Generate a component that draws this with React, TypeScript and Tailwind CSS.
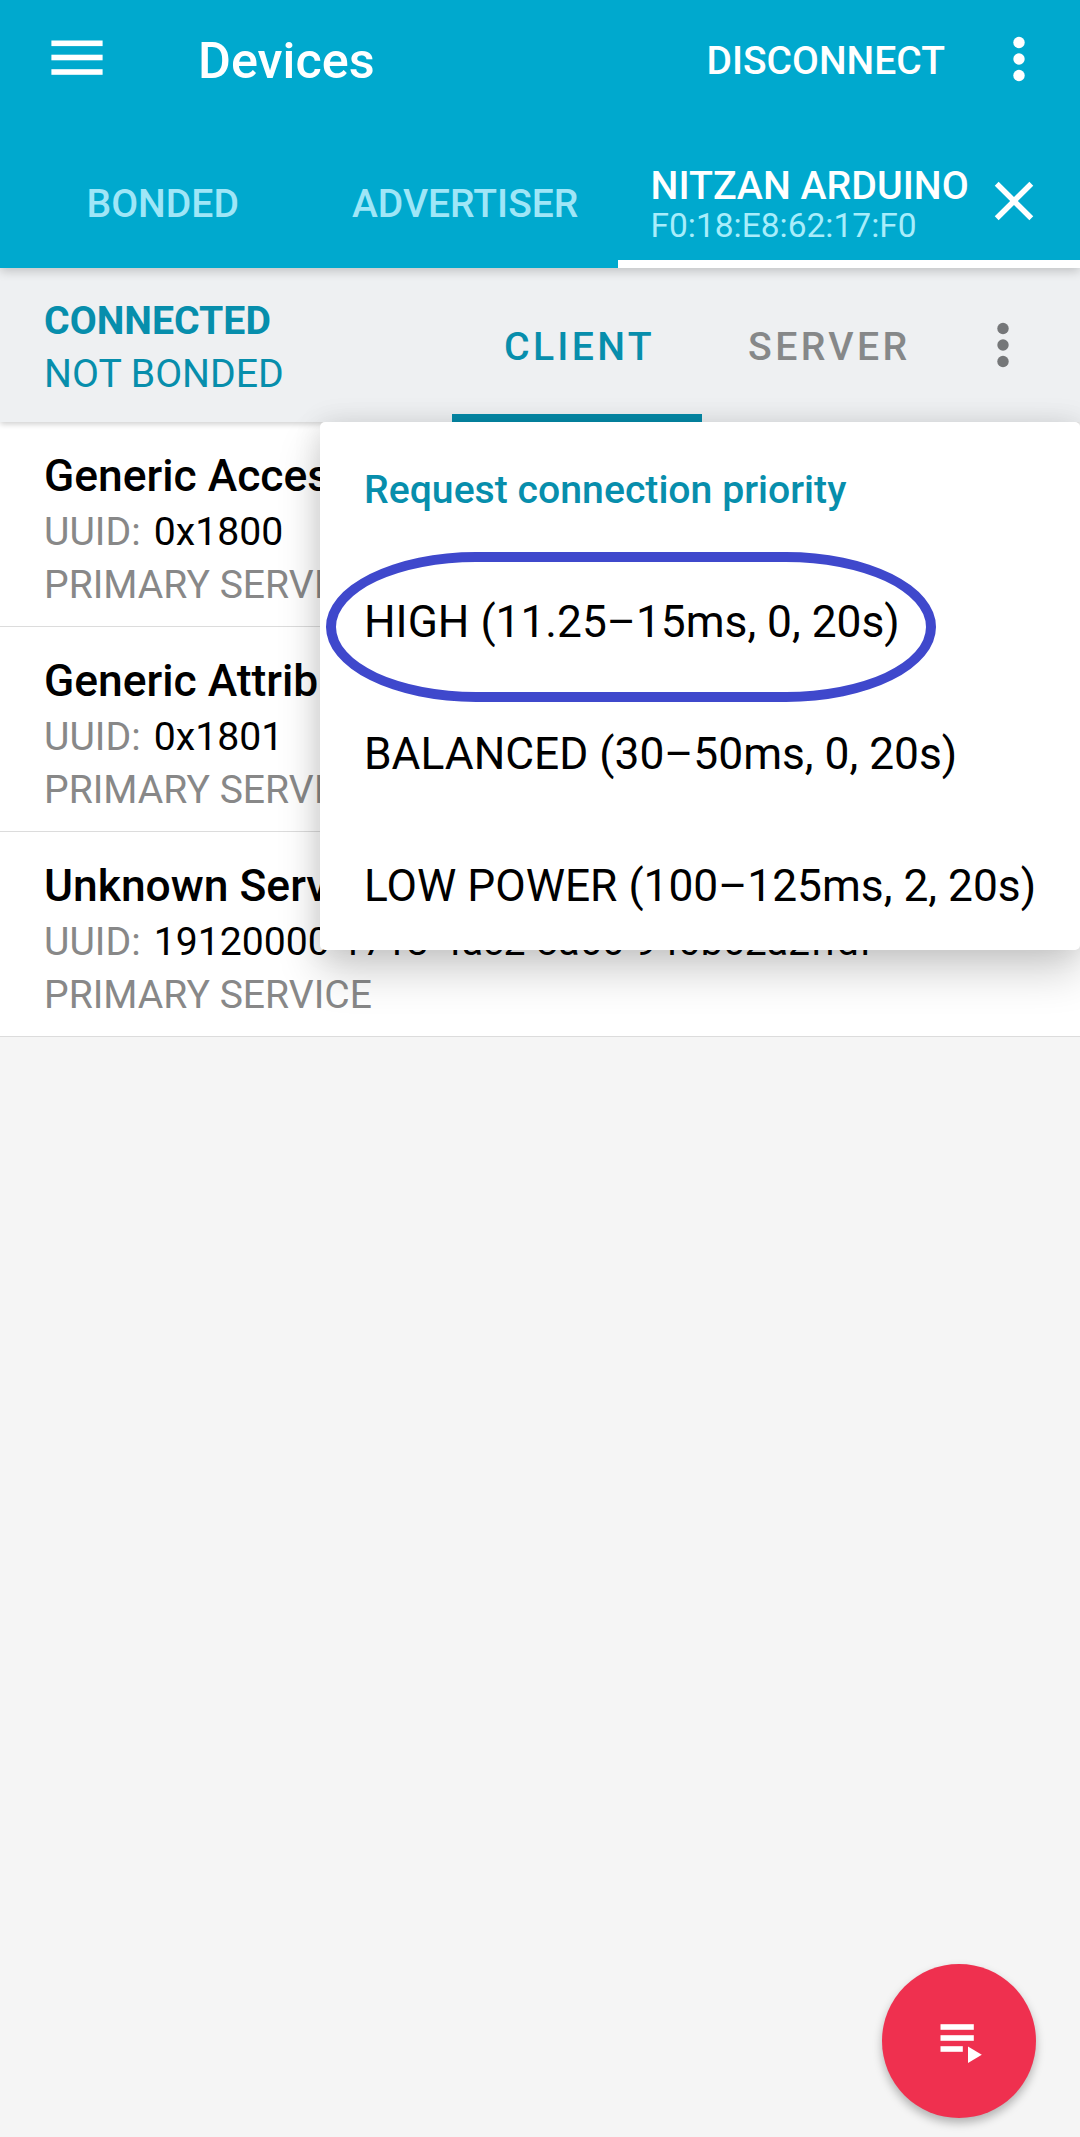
const services = [
  { name: "Generic Access", uuid: "0x1800" },
  { name: "Generic Attribute", uuid: "0x1801" },
  { name: "Unknown Service", uuid: "19120000-1713-4ac2-8a66-940b62a2ffdf" },
];

const priorities = [
  "HIGH (11.25–15ms, 0, 20s)",
  "BALANCED (30–50ms, 0, 20s)",
  "LOW POWER (100–125ms, 2, 20s)",
];

function MoreIcon({ className }: { className: string }) {
  return (
    <svg viewBox="0 0 12 46" className={`h-[46px] w-3 ${className}`} fill="currentColor">
      <circle cx="6" cy="6.5" r="5.7" />
      <circle cx="6" cy="23" r="5.7" />
      <circle cx="6" cy="39.5" r="5.7" />
    </svg>
  );
}

function Header() {
  return (
    <header className="relative z-20 h-[268px] bg-[#00a9ce] text-white shadow-[0_3px_10px_rgba(0,0,0,0.2)]">
      <div className="flex h-[139px] items-center pr-[55px] pb-4 pl-[51px]">
        <svg viewBox="0 0 52 36" className="-mt-2 h-9 w-[52px]" fill="currentColor">
          <rect x="0.4" y="0.5" width="51.2" height="5.6" />
          <rect x="0.4" y="14.7" width="51.2" height="5.6" />
          <rect x="0.4" y="29.2" width="51.2" height="5.6" />
        </svg>
        <h1 className="ml-[95px] text-[50.4px] leading-none font-medium">Devices</h1>
        <span className="mr-[68px] ml-auto text-[39px] leading-none font-medium">DISCONNECT</span>
        <MoreIcon className="-mt-[5px]" />
      </div>
      <nav className="flex h-[129px] whitespace-nowrap">
        <div className="flex w-[266px] items-center pt-0.5 pl-[86.5px] text-[39.1px] font-medium text-[#9fe6f7]">BONDED</div>
        <div className="flex w-[352px] items-center pt-0.5 pl-[86px] text-[39px] font-medium text-[#9fe6f7]">ADVERTISER</div>
        <div className="flex flex-1 border-b-8 border-white pl-[32.5px]">
          <div className="w-[330px] pt-6">
            <div className="text-[39.3px] leading-[46px] font-medium">NITZAN ARDUINO</div>
            <div className="text-[33.5px] leading-[34px] text-[#a8edfb]">F0:18:E8:62:17:F0</div>
          </div>
          <svg viewBox="0 0 24 24" className="mt-[29px] h-[66px] w-[66px]" fill="currentColor">
            <path d="M19 6.41 17.59 5 12 10.59 6.41 5 5 6.41 10.59 12 5 17.59 6.41 19 12 13.41 17.59 19 19 17.59 13.41 12z" />
          </svg>
        </div>
      </nav>
    </header>
  );
}

function ConnectionBar() {
  return (
    <section className="relative z-10 flex h-[154px] bg-[#eef0f2] text-[39.2px] shadow-[0_2px_6px_rgba(0,0,0,0.2)]">
      <div className="w-[452px] pt-[27px] pl-11 leading-[53px] text-[#078eac]">
        <div className="font-bold">CONNECTED</div>
        <div>NOT BONDED</div>
      </div>
      <div className="flex w-[250px] items-center border-b-8 border-[#0589a7] pt-[13px] pl-[52px] font-medium tracking-[3.3px] text-[#078eac]">
        CLIENT
      </div>
      <div className="flex w-[250px] items-center pt-[5px] pl-[46px] font-medium tracking-[3.4px] text-[#868889]">
        SERVER
      </div>
      <MoreIcon className="mt-[54px] ml-[45px] text-[#757779]" />
    </section>
  );
}

function PriorityMenu() {
  return (
    <div className="absolute top-[422px] left-[320px] z-30 h-[528px] w-[760px] rounded-[5px] bg-white pt-0.5 pl-11 whitespace-nowrap shadow-[0_22px_44px_rgba(0,0,0,0.19),0_0_28px_rgba(0,0,0,0.1)]">
      <div className="text-[39.2px] leading-[132px] font-medium text-[#078eac]">Request connection priority</div>
      {priorities.map((label) => (
        <div key={label} className="text-[44.3px] leading-[132px] text-black">
          {label}
        </div>
      ))}
      <div className="absolute top-[130px] left-[6px] h-[150px] w-[610px] rounded-[150px/75px] border-10 border-[#3f48cc]" />
    </div>
  );
}

export default function App() {
  return (
    <main className="relative h-[2137px] w-[1080px] overflow-hidden bg-[#f5f5f5] font-[Roboto,sans-serif]">
      <Header />
      <ConnectionBar />
      <ul>
        {services.map((s) => (
          <li key={s.uuid} className="h-[205px] border-b border-[#dcdcdc] bg-white pt-7 pl-11 whitespace-nowrap">
            <div className="text-[44.4px] leading-[53px] font-medium text-black">{s.name}</div>
            <div className="mt-[3px] flex gap-[13px] text-[39.2px] leading-[53px] text-[#888]">
              UUID:
              <span className="text-black">{s.uuid}</span>
            </div>
            <div className="text-[39.1px] leading-[53px] text-[#888]">PRIMARY SERVICE</div>
          </li>
        ))}
      </ul>
      <PriorityMenu />
      <button className="absolute top-[1964px] left-[882px] h-[154px] w-[154px] rounded-full bg-[#ef304f] text-white shadow-[0_5px_10px_rgba(0,0,0,0.28)]">
        <svg viewBox="0 0 154 154" className="h-full w-full" fill="currentColor">
          <rect x="58.5" y="60.2" width="33.3" height="5.6" />
          <rect x="58.5" y="71.2" width="33.3" height="5.6" />
          <rect x="58.5" y="82.2" width="22.3" height="5.6" />
          <path d="M86 82.5 99.8 90.8 86 99z" />
        </svg>
      </button>
    </main>
  );
}
